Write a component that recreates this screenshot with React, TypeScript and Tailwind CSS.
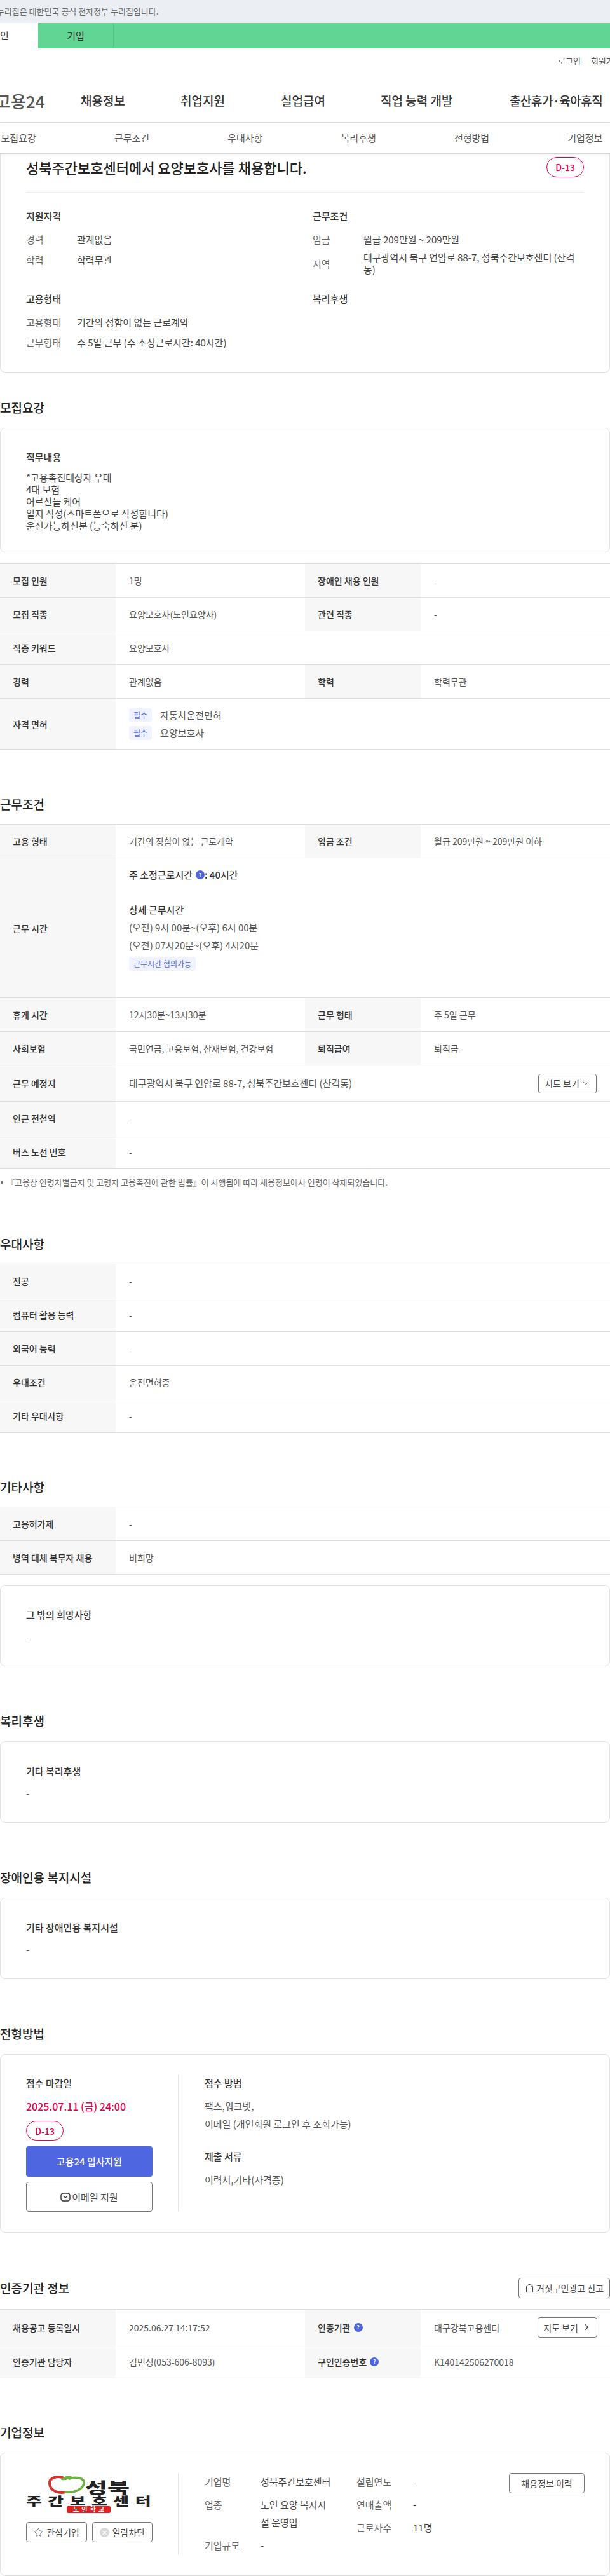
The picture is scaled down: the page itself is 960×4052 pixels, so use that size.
import { ReactNode } from 'react';
import { ChevronDown, ChevronRight, Star } from 'lucide-react';

const rowLabel = 'flex items-center bg-[#f7f7f7] pl-5 font-medium text-[#333]';
const rowValue = 'flex items-center pl-[21px] text-[#555]';

function Row2({ a, b, c, d, h = 'h-[53px]', after }: { a: ReactNode; b: ReactNode; c: ReactNode; d: ReactNode; h?: string; after?: ReactNode }) {
  return (
    <div className={`grid grid-cols-[182px_298px_182px_1fr] border-b border-[#dedede] text-sm ${h}`}>
      <div className={rowLabel}>{a}</div>
      <div className={rowValue}>{b}</div>
      <div className={rowLabel}>{c}</div>
      <div className={`${rowValue} justify-between pr-5`}>
        {d}
        {after}
      </div>
    </div>
  );
}

function Row1({ a, b, h = 'h-[53px]' }: { a: ReactNode; b: ReactNode; h?: string }) {
  return (
    <div className={`grid grid-cols-[182px_1fr] border-b border-[#dedede] text-sm ${h}`}>
      <div className={rowLabel}>{a}</div>
      <div className={rowValue}>{b}</div>
    </div>
  );
}

function Heading({ children, className }: { children: ReactNode; className: string }) {
  return <h2 className={`h-[28px] text-[19px] leading-[28px] font-medium text-[#222] ${className}`}>{children}</h2>;
}

function Table({ children }: { children: ReactNode }) {
  return <div className="border-t border-[#dedede]">{children}</div>;
}

function Card({ children, className }: { children: ReactNode; className?: string }) {
  return <div className={`rounded-lg border border-[#e2e2e2] bg-white ${className ?? ''}`}>{children}</div>;
}

function TextCard({ title }: { title: string }) {
  return (
    <Card className="h-[128px] pt-[34px] pl-10">
      <p className="text-[15px] leading-[24px] font-medium text-[#333]">{title}</p>
      <p className="mt-[11px] text-[15px] leading-[24px] text-[#555]">-</p>
    </Card>
  );
}

function Help() {
  return (
    <span className="inline-flex h-[14px] w-[14px] items-center justify-center rounded-full bg-[#4e67e0] text-[9px] leading-none font-bold text-white">?</span>
  );
}

function Chip({ children }: { children: ReactNode }) {
  return <span className="inline-flex h-[22px] items-center rounded bg-[#f0f2fd] px-[7px] text-xs text-[#4e67e0]">{children}</span>;
}

function Pill({ className }: { className: string }) {
  return (
    <span className={`flex items-center justify-center rounded-[16px] border border-[#e6004f] text-sm font-medium text-[#e6004f] ${className}`}>D-13</span>
  );
}

function Outline({ children, className }: { children: ReactNode; className: string }) {
  return (
    <button className={`flex items-center justify-center rounded border border-[#777] bg-white text-sm whitespace-nowrap text-[#444] ${className}`}>{children}</button>
  );
}

function Info({ label, children }: { label: string; children: ReactNode }) {
  return (
    <div className="flex min-h-[19px] items-center text-[15px] leading-[19px]">
      <span className="w-[80px] shrink-0 text-[#666]">{label}</span>
      <span className="w-[347px] break-all text-[#444]">{children}</span>
    </div>
  );
}

function Logo() {
  return (
    <svg width="198" height="62" viewBox="0 0 198 62" className="block">
      <path d="M62 7C50 1 36 5 37 15C38 26 51 31 62 28" fill="none" stroke="#d7302e" strokeWidth="4" strokeLinecap="round" />
      <path d="M68 7C79 3 92 6 91 14C90 23 77 30 62 28" fill="none" stroke="#6cb33f" strokeWidth="3.5" strokeLinecap="round" />
      <path d="M55 9C58 3 65 2 72 3C69 8 62 10 55 9Z" fill="#6cb33f" />
      <text x="93" y="30" fontSize="24" fontWeight="900" fill="#222" textLength="70" lengthAdjust="spacingAndGlyphs">성북</text>
      <text transform="scale(1.5 1)" x="0" y="49" fontSize="18" fontWeight="900" fill="#222" textLength="131" lengthAdjust="spacing">주간보호센터</text>
      <rect x="64" y="50" width="69" height="11" rx="2.5" fill="#dd2222" />
      <text x="74" y="59" fontSize="10" fontWeight="700" fill="#fff" textLength="49" lengthAdjust="spacing">노인학교</text>
    </svg>
  );
}

export default function App() {
  return (
    <div className="w-[960px] overflow-hidden bg-white [font-family:'Noto_Sans_CJK_KR',sans-serif]">
      <div className="h-[36px] overflow-hidden bg-[#ebeef3] text-[13px] leading-[36px] whitespace-nowrap text-[#666]">
        <span className="-ml-[20px] block">이 누리집은 대한민국 공식 전자정부 누리집입니다.</span>
      </div>
      <div className="flex h-[40px] bg-[#61d593] text-[15px] leading-[40px] text-[#333]">
        <div className="-ml-[60px] w-[120px] shrink-0 bg-white text-center">개인</div>
        <div className="w-[119px] shrink-0 border-r border-[#52c583] text-center">기업</div>
      </div>

      <div className="h-[117px] border-b border-[#e6e6e6]">
        <div className="flex gap-4 pt-[10px] pl-[878px] text-[13px] leading-[20px] whitespace-nowrap text-[#555]">
          <span>로그인</span>
          <span>회원가입</span>
        </div>
        <div className="mt-[34px] flex h-[36px] items-center text-[19px] font-medium whitespace-nowrap text-[#333]">
          <span className="-ml-[7px] w-[134px] shrink-0 text-[26px] font-medium text-[#555]">고용24</span>
          <span className="w-[157px] shrink-0">채용정보</span>
          <span className="w-[158px] shrink-0">취업지원</span>
          <span className="w-[157px] shrink-0">실업급여</span>
          <span className="w-[203px] shrink-0">직업 능력 개발</span>
          <span className="tracking-[-0.5px]">출산휴가·육아휴직</span>
        </div>
      </div>

      <div className="relative z-10 h-[48px] overflow-hidden bg-white shadow-[0_1px_3px_rgba(0,0,0,0.25)]">
        <div className="-ml-[60px] grid w-[1070px] grid-cols-6 text-center text-[15px] leading-[48px] text-[#555]">
          <span>모집요강</span>
          <span>근무조건</span>
          <span>우대사항</span>
          <span>복리후생</span>
          <span>전형방법</span>
          <span>기업정보</span>
        </div>
      </div>

      <Card className="h-[345px] rounded-t-none border-t-0 px-10">
        <div className="flex h-[62px] items-start justify-between border-b border-[#ececec] pt-[6px]">
          <h1 className="text-[22px] leading-[32px] font-medium text-[#222]">성북주간보호센터에서 요양보호사를 채용합니다.</h1>
          <Pill className="h-[32px] w-[59px]" />
        </div>
        <div className="mt-[26px] grid grid-cols-[451px_1fr]">
          <div>
            <h3 className="text-[15px] leading-[22px] font-medium text-[#333]">지원자격</h3>
            <div className="mt-[16px] flex flex-col gap-[13px]">
              <Info label="경력">관계없음</Info>
              <Info label="학력">학력무관</Info>
            </div>
          </div>
          <div>
            <h3 className="text-[15px] leading-[22px] font-medium text-[#333]">근무조건</h3>
            <div className="mt-[16px] flex flex-col gap-[9px]">
              <Info label="임금">월급 209만원 ~ 209만원</Info>
              <Info label="지역">대구광역시 북구 연암로 88-7, 성북주간보호센터 (산격동)</Info>
            </div>
          </div>
          <div className="mt-[26px]">
            <h3 className="text-[15px] leading-[22px] font-medium text-[#333]">고용형태</h3>
            <div className="mt-[16px] flex flex-col gap-[13px]">
              <Info label="고용형태">기간의 정함이 없는 근로계약</Info>
              <Info label="근무형태">주 5일 근무 (주 소정근로시간: 40시간)</Info>
            </div>
          </div>
          <div className="mt-[26px]">
            <h3 className="text-[15px] leading-[22px] font-medium text-[#333]">복리후생</h3>
          </div>
        </div>
      </Card>

      <Heading className="mt-[41px] mb-[18px]">모집요강</Heading>
      <Card className="h-[196px] pt-[35px] pl-10">
        <p className="text-[15px] leading-[20px] font-medium text-[#333]">직무내용</p>
        <div className="mt-[12px] text-[15px] leading-[19px] text-[#444]">
          <p>*고용촉진대상자 우대</p>
          <p>4대 보험</p>
          <p>어르신들 케어</p>
          <p>일지 작성(스마트폰으로 작성합니다)</p>
          <p>운전가능하신분 (능숙하신 분)</p>
        </div>
      </Card>

      <div className="mt-[17px]">
        <Table>
          <Row2 a="모집 인원" b="1명" c="장애인 채용 인원" d="-" />
          <Row2 a="모집 직종" b="요양보호사(노인요양사)" c="관련 직종" d="-" />
          <Row1 a="직종 키워드" b="요양보호사" />
          <Row2 a="경력" b="관계없음" c="학력" d="학력무관" />
          <Row1
            a="자격 면허"
            h="h-[80px]"
            b={
              <div className="flex flex-col gap-[6px]">
                <div className="flex items-center gap-[13px] text-[15px]"><Chip>필수</Chip>자동차운전면허</div>
                <div className="flex items-center gap-[13px] text-[15px]"><Chip>필수</Chip>요양보호사</div>
              </div>
            }
          />
        </Table>
      </div>

      <Heading className="mt-[72px] mb-[17px]">근무조건</Heading>
      <Table>
        <Row2 a="고용 형태" b="기간의 정함이 없는 근로계약" c="임금 조건" d="월급 209만원 ~ 209만원 이하" />
        <Row1
          a="근무 시간"
          h="h-[220px]"
          b={
            <div className="h-full pt-[12px] text-[15px] leading-[28px]">
              <p className="flex items-center gap-[5px] font-medium text-[#333]">주 소정근로시간 <span className="flex items-center"><Help />: 40시간</span></p>
              <p className="mt-[27px] font-medium text-[#333]">상세 근무시간</p>
              <p>(오전) 9시 00분~(오후) 6시 00분</p>
              <p>(오전) 07시20분~(오후) 4시20분</p>
              <div className="mt-[4px] flex"><Chip>근무시간 협의가능</Chip></div>
            </div>
          }
        />
        <Row2 a="휴게 시간" b="12시30분~13시30분" c="근무 형태" d="주 5일 근무" />
        <Row2 a="사회보험" b="국민연금, 고용보험, 산재보험, 건강보험" c="퇴직급여" d="퇴직금" />
        <div className="grid h-[57px] grid-cols-[182px_1fr] border-b border-[#dedede] text-sm">
          <div className={rowLabel}>근무 예정지</div>
          <div className={`${rowValue} justify-between pr-[21px] text-[15px]`}>
            대구광역시 북구 연암로 88-7, 성북주간보호센터 (산격동)
            <Outline className="h-[31px] w-[92px] gap-[3px]">지도 보기 <ChevronDown size={14} strokeWidth={1.5} /></Outline>
          </div>
        </div>
        <Row1 a="인근 전철역" b="-" />
        <Row1 a="버스 노선 번호" b="-" />
      </Table>
      <p className="mt-[11px] flex h-[20px] items-center gap-[5px] pl-[1px] text-[13px] leading-[20px] text-[#666]">
        <span className="h-[4px] w-[4px] shrink-0 rounded-full bg-[#666]" />
        『고용상 연령차별금지 및 고령자 고용촉진에 관한 법률』이 시행됨에 따라 채용정보에서 연령이 삭제되었습니다.
      </p>

      <Heading className="mt-[73px] mb-[17px]">우대사항</Heading>
      <Table>
        <Row1 a="전공" b="-" />
        <Row1 a="컴퓨터 활용 능력" b="-" />
        <Row1 a="외국어 능력" b="-" />
        <Row1 a="우대조건" b="운전면허증" />
        <Row1 a="기타 우대사항" b="-" />
      </Table>

      <Heading className="mt-[71px] mb-[17px]">기타사항</Heading>
      <Table>
        <Row1 a="고용허가제" b="-" />
        <Row1 a="병역 대체 복무자 채용" b="비희망" />
      </Table>
      <div className="mt-[16px]">
        <TextCard title="그 밖의 희망사항" />
      </div>

      <Heading className="mt-[72px] mb-[18px]">복리후생</Heading>
      <TextCard title="기타 복리후생" />

      <Heading className="mt-[72px] mb-[18px]">장애인용 복지시설</Heading>
      <TextCard title="기타 장애인용 복지시설" />

      <Heading className="mt-[72px] mb-[18px]">전형방법</Heading>
      <Card className="flex h-[281px] px-10 pt-[31px]">
        <div className="h-[216px] w-[240px] shrink-0 border-r border-[#e6e6e6]">
          <div className="w-[199px]">
            <p className="text-[15px] leading-[28px] font-medium text-[#333]">접수 마감일</p>
            <p className="mt-2 text-base leading-[28px] font-medium whitespace-nowrap text-[#e6004f]">2025.07.11 (금) 24:00</p>
            <Pill className="mt-[9px] h-[31px] w-[59px]" />
            <button className="mt-[9px] h-[48px] w-full rounded bg-[#4e67e0] text-[15px] font-medium text-white">고용24 입사지원</button>
            <Outline className="mt-2 h-[47px] w-full gap-[2px] text-[15px]">
              <svg width="16" height="16" viewBox="0 0 16 16" fill="none" stroke="#333" strokeWidth="1.4">
                <rect x="1" y="2" width="14" height="12" rx="3.5" />
                <path d="M5 6.5L8 9L11 6.5" strokeLinecap="round" strokeLinejoin="round" />
              </svg>
              이메일 지원
            </Outline>
          </div>
        </div>
        <div className="pl-[41px] text-[15px] leading-[28px] text-[#555]">
          <p className="font-medium text-[#333]">접수 방법</p>
          <p className="mt-2">팩스,워크넷,</p>
          <p>이메일 (개인회원 로그인 후 조회가능)</p>
          <p className="mt-[23px] font-medium text-[#333]">제출 서류</p>
          <p className="mt-[9px]">이력서,기타(자격증)</p>
        </div>
      </Card>

      <div className="mt-[71px] mb-[17px] flex h-[32px] items-center justify-between">
        <h2 className="text-[19px] font-medium text-[#222]">인증기관 정보</h2>
        <Outline className="h-[32px] w-[144px] gap-[3px]">
          <svg width="15" height="15" viewBox="0 0 15 15" fill="none" stroke="#444" strokeWidth="1.1">
            <path d="M2.5 13.5V6.5C2.5 3.5 4.8 1.5 7.5 1.5C10.2 1.5 12.5 3.5 12.5 6.5V13.5Z" strokeLinejoin="round" />
            <path d="M9 3.5C10 4 10.5 5 10.5 6" />
          </svg>
          거짓구인광고 신고
        </Outline>
      </div>
      <Table>
        <Row2
          h="h-[56px]"
          a="채용공고 등록일시"
          b="2025.06.27 14:17:52"
          c={<span className="flex items-center gap-[5px]">인증기관 <Help /></span>}
          d="대구강북고용센터"
          after={<Outline className="h-[32px] w-[94px] gap-[6px]">지도 보기 <ChevronRight size={15} strokeWidth={2} /></Outline>}
        />
        <Row2
          h="h-[52px]"
          a="인증기관 담당자"
          b="김민성(053-606-8093)"
          c={<span className="flex items-center gap-[5px]">구인인증번호 <Help /></span>}
          d="K140142506270018"
        />
      </Table>

      <Heading className="mt-[71px] mb-[18px]">기업정보</Heading>
      <Card className="flex h-[194px] px-10 pt-[31px]">
        <div className="h-[128px] w-[240px] shrink-0 border-r border-[#e6e6e6]">
          <div className="w-[199px]">
            <div className="pt-[2px]"><Logo /></div>
            <div className="mt-[13px] flex gap-2">
              <Outline className="h-[32px] w-[96px] gap-[5px]"><Star size={15} strokeWidth={1.3} />관심기업</Outline>
              <Outline className="h-[32px] w-[95px] gap-[5px]">
                <span className="flex h-[15px] w-[15px] items-center justify-center rounded-full bg-[#d9d9d9] text-[11px] leading-none text-white">✕</span>
                열람차단
              </Outline>
            </div>
          </div>
        </div>
        <div className="flex flex-1 pl-[41px] text-[15px] leading-[28px]">
          <div className="flex w-[239px] flex-col gap-2">
            <div className="flex"><span className="w-[88px] shrink-0 text-[#666]">기업명</span><span className="text-[#444]">성북주간보호센터</span></div>
            <div className="flex"><span className="w-[88px] shrink-0 text-[#666]">업종</span><span className="w-[112px] break-all text-[#444]">노인 요양 복지시설 운영업</span></div>
            <div className="flex"><span className="w-[88px] shrink-0 text-[#666]">기업규모</span><span className="text-[#444]">-</span></div>
          </div>
          <div className="flex w-[240px] flex-col gap-2">
            <div className="flex"><span className="w-[89px] shrink-0 text-[#666]">설립연도</span><span className="text-[#444]">-</span></div>
            <div className="flex"><span className="w-[89px] shrink-0 text-[#666]">연매출액</span><span className="text-[#444]">-</span></div>
            <div className="flex"><span className="w-[89px] shrink-0 text-[#666]">근로자수</span><span className="text-[#444]">11명</span></div>
          </div>
          <Outline className="h-[32px] w-[119px]">채용정보 이력</Outline>
        </div>
      </Card>
    </div>
  );
}
